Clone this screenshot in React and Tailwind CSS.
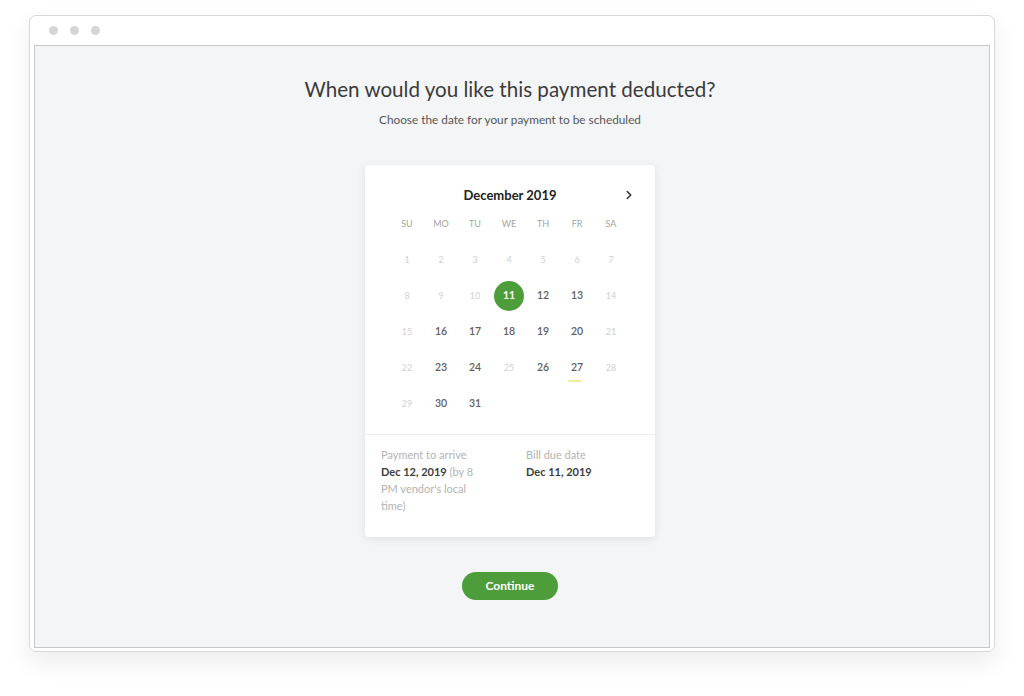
import React from 'react';
import { ChevronRight } from 'lucide-react';

const weekdays = ['SU', 'MO', 'TU', 'WE', 'TH', 'FR', 'SA'];
const active = [12, 13, 16, 17, 18, 19, 20, 23, 24, 26, 27, 30, 31];

function DayCell({ day }) {
  if (day === 11) {
    return (
      <div className="h-[36px] flex items-center justify-center">
        <div className="w-[30px] h-[30px] rounded-full bg-[#4e9d3b] text-white text-[10.5px] font-bold flex items-center justify-center">
          11
        </div>
      </div>
    );
  }
  const on = active.includes(day);
  return (
    <div className="h-[36px] flex items-center justify-center relative">
      <span className={on ? 'text-[10.5px] font-semibold text-[#606060]' : 'text-[9px] text-[#d0d0d0]'}>{day}</span>
      {day === 27 && <div className="absolute left-[8px] bottom-[4px] w-[14px] h-[2px] rounded-full bg-[#f3ec9c]"></div>}
    </div>
  );
}

export default function App() {
  const days = Array.from({ length: 31 }, (_, i) => i + 1);

  return (
    <div className="w-[1024px] h-[696px] bg-white pt-[15px] pl-[29px]" style={{ fontFamily: 'Lato, "Open Sans", sans-serif' }}>
      {/* browser frame */}
      <div className="w-[966px] h-[637px] rounded-[7px] border border-[#d8d8d8] bg-white shadow-[0_10px_24px_rgba(0,0,0,0.08)] px-[4px] pb-[3px] flex flex-col">
        <div className="h-[29px] flex items-center gap-[12px] pl-[15px]">
          <div className="w-[9px] h-[9px] rounded-full bg-[#d6d6d8]"></div>
          <div className="w-[9px] h-[9px] rounded-full bg-[#d6d6d8]"></div>
          <div className="w-[9px] h-[9px] rounded-full bg-[#d6d6d8]"></div>
        </div>

        <div className="flex-1 bg-[#f4f5f7] border border-[#c8c8c8] flex flex-col items-center pt-[29px] pr-[4px]">
          <h1 className="text-[20.6px] leading-[28px] text-[#3b3b3b]">When would you like this payment deducted?</h1>
          <p className="mt-[9px] text-[11.8px] leading-[16px] text-[#555]">Choose the date for your payment to be scheduled</p>

          {/* calendar card */}
          <div className="mt-[37px] w-[290px] bg-white rounded-[4px] shadow-[0_2px_8px_rgba(0,0,0,0.09)]">
            <div className="relative pt-[20px] h-[40px]">
              <div className="text-center text-[13px] leading-[20px] font-bold text-[#222]">December 2019</div>
              <ChevronRight className="absolute right-[19px] top-[23px] w-[14px] h-[14px] text-[#333]" strokeWidth={2.6} />
            </div>

            <div className="px-[25px] pt-[11px] pb-[12px]">
              <div className="grid grid-cols-7 w-[238px] h-[16px] items-center">
                {weekdays.map(d => (
                  <div key={d} className="text-center text-[9px] text-[#a3a3a3]">{d}</div>
                ))}
              </div>
              <div className="grid grid-cols-7 w-[238px] mt-[10px]">
                {days.map(d => <DayCell key={d} day={d} />)}
              </div>
            </div>

            <div className="border-t border-[#eeeeee] grid grid-cols-[145px_1fr] pl-[16px] pt-[11px] pb-[23px] text-[11px] leading-[17px]">
              <div className="w-[104px]">
                <div className="text-[#b3b3b3]">Payment to arrive</div>
                <p className="text-[#b3b3b3]">
                  <b className="font-bold text-[#3d3d3d]">Dec 12, 2019</b> (by 8 PM vendor's local time)
                </p>
              </div>
              <div>
                <div className="text-[#b3b3b3]">Bill due date</div>
                <div className="font-bold text-[#3d3d3d]">Dec 11, 2019</div>
              </div>
            </div>
          </div>

          <button className="mt-[35px] w-[96px] h-[28px] rounded-full bg-[#4e9d3b] text-white text-[12px] font-bold">
            Continue
          </button>
        </div>
      </div>
    </div>
  );
}
